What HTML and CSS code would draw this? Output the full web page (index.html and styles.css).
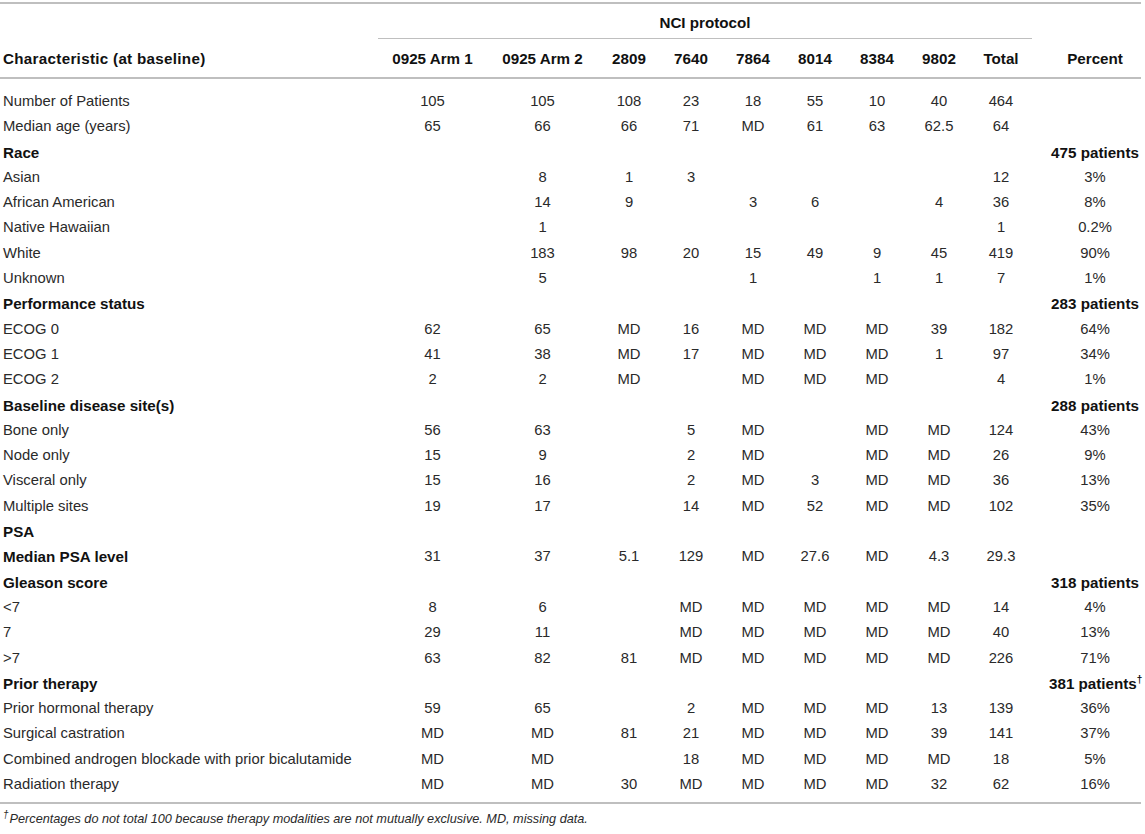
FILE: index.html
```html
<!DOCTYPE html>
<html>
<head>
<meta charset="utf-8">
<link rel="stylesheet" href="styles.css">
</head>
<body>
<div class="wrap">
<table class="tbl">
<colgroup>
<col class="c-label"><col class="c-arm"><col class="c-arm2"><col class="c-n"><col class="c-n"><col class="c-n"><col class="c-n"><col class="c-n"><col class="c-n"><col class="c-n"><col class="c-pct">
</colgroup>
<thead>
<tr class="r-group">
<th class="label"></th>
<th colspan="9" class="nci">NCI protocol</th>
<th></th>
</tr>
<tr class="r-head">
<th class="label">Characteristic (at baseline)</th>
<th>0925 Arm 1</th><th>0925 Arm 2</th><th>2809</th><th>7640</th><th>7864</th><th>8014</th><th>8384</th><th>9802</th><th>Total</th><th class="pct">Percent</th>
</tr>
</thead>
<tbody>
<tr class="first"><td class="label">Number of Patients</td><td>105</td><td>105</td><td>108</td><td>23</td><td>18</td><td>55</td><td>10</td><td>40</td><td>464</td><td class="pct"></td></tr>
<tr><td class="label">Median age (years)</td><td>65</td><td>66</td><td>66</td><td>71</td><td>MD</td><td>61</td><td>63</td><td>62.5</td><td>64</td><td class="pct"></td></tr>
<tr class="sec"><td class="label">Race</td><td></td><td></td><td></td><td></td><td></td><td></td><td></td><td></td><td></td><td class="pct">475 patients</td></tr>
<tr><td class="label">Asian</td><td></td><td>8</td><td>1</td><td>3</td><td></td><td></td><td></td><td></td><td>12</td><td class="pct">3%</td></tr>
<tr><td class="label">African American</td><td></td><td>14</td><td>9</td><td></td><td>3</td><td>6</td><td></td><td>4</td><td>36</td><td class="pct">8%</td></tr>
<tr><td class="label">Native Hawaiian</td><td></td><td>1</td><td></td><td></td><td></td><td></td><td></td><td></td><td>1</td><td class="pct">0.2%</td></tr>
<tr><td class="label">White</td><td></td><td>183</td><td>98</td><td>20</td><td>15</td><td>49</td><td>9</td><td>45</td><td>419</td><td class="pct">90%</td></tr>
<tr><td class="label">Unknown</td><td></td><td>5</td><td></td><td></td><td>1</td><td></td><td>1</td><td>1</td><td>7</td><td class="pct">1%</td></tr>
<tr class="sec"><td class="label">Performance status</td><td></td><td></td><td></td><td></td><td></td><td></td><td></td><td></td><td></td><td class="pct">283 patients</td></tr>
<tr><td class="label">ECOG 0</td><td>62</td><td>65</td><td>MD</td><td>16</td><td>MD</td><td>MD</td><td>MD</td><td>39</td><td>182</td><td class="pct">64%</td></tr>
<tr><td class="label">ECOG 1</td><td>41</td><td>38</td><td>MD</td><td>17</td><td>MD</td><td>MD</td><td>MD</td><td>1</td><td>97</td><td class="pct">34%</td></tr>
<tr><td class="label">ECOG 2</td><td>2</td><td>2</td><td>MD</td><td></td><td>MD</td><td>MD</td><td>MD</td><td></td><td>4</td><td class="pct">1%</td></tr>
<tr class="sec"><td class="label">Baseline disease site(s)</td><td></td><td></td><td></td><td></td><td></td><td></td><td></td><td></td><td></td><td class="pct">288 patients</td></tr>
<tr><td class="label">Bone only</td><td>56</td><td>63</td><td></td><td>5</td><td>MD</td><td></td><td>MD</td><td>MD</td><td>124</td><td class="pct">43%</td></tr>
<tr><td class="label">Node only</td><td>15</td><td>9</td><td></td><td>2</td><td>MD</td><td></td><td>MD</td><td>MD</td><td>26</td><td class="pct">9%</td></tr>
<tr><td class="label">Visceral only</td><td>15</td><td>16</td><td></td><td>2</td><td>MD</td><td>3</td><td>MD</td><td>MD</td><td>36</td><td class="pct">13%</td></tr>
<tr><td class="label">Multiple sites</td><td>19</td><td>17</td><td></td><td>14</td><td>MD</td><td>52</td><td>MD</td><td>MD</td><td>102</td><td class="pct">35%</td></tr>
<tr class="sec"><td class="label">PSA</td><td></td><td></td><td></td><td></td><td></td><td></td><td></td><td></td><td></td><td class="pct"></td></tr>
<tr><td class="label bold">Median PSA level</td><td>31</td><td>37</td><td>5.1</td><td>129</td><td>MD</td><td>27.6</td><td>MD</td><td>4.3</td><td>29.3</td><td class="pct"></td></tr>
<tr class="sec"><td class="label">Gleason score</td><td></td><td></td><td></td><td></td><td></td><td></td><td></td><td></td><td></td><td class="pct">318 patients</td></tr>
<tr><td class="label">&lt;7</td><td>8</td><td>6</td><td></td><td>MD</td><td>MD</td><td>MD</td><td>MD</td><td>MD</td><td>14</td><td class="pct">4%</td></tr>
<tr><td class="label">7</td><td>29</td><td>11</td><td></td><td>MD</td><td>MD</td><td>MD</td><td>MD</td><td>MD</td><td>40</td><td class="pct">13%</td></tr>
<tr><td class="label">&gt;7</td><td>63</td><td>82</td><td>81</td><td>MD</td><td>MD</td><td>MD</td><td>MD</td><td>MD</td><td>226</td><td class="pct">71%</td></tr>
<tr class="sec"><td class="label">Prior therapy</td><td></td><td></td><td></td><td></td><td></td><td></td><td></td><td></td><td></td><td class="pct">381 patients<sup class="dag">†</sup></td></tr>
<tr><td class="label">Prior hormonal therapy</td><td>59</td><td>65</td><td></td><td>2</td><td>MD</td><td>MD</td><td>MD</td><td>13</td><td>139</td><td class="pct">36%</td></tr>
<tr><td class="label">Surgical castration</td><td>MD</td><td>MD</td><td>81</td><td>21</td><td>MD</td><td>MD</td><td>MD</td><td>39</td><td>141</td><td class="pct">37%</td></tr>
<tr><td class="label">Combined androgen blockade with prior bicalutamide</td><td>MD</td><td>MD</td><td></td><td>18</td><td>MD</td><td>MD</td><td>MD</td><td>MD</td><td>18</td><td class="pct">5%</td></tr>
<tr class="last"><td class="label">Radiation therapy</td><td>MD</td><td>MD</td><td>30</td><td>MD</td><td>MD</td><td>MD</td><td>MD</td><td>32</td><td>62</td><td class="pct">16%</td></tr>
</tbody>
</table>
<p class="note"><sup class="ndag">†</sup>Percentages do not total 100 because therapy modalities are not mutually exclusive. MD, missing data.</p>
</div>
</body>
</html>
```

FILE: styles.css
```css
html, body {
  margin: 0;
  padding: 0;
  background: #ffffff;
}
body {
  font-family: "Liberation Sans", Arial, Helvetica, sans-serif;
  color: #2a2a2a;
}
.wrap {
  padding-top: 2px;
}
.tbl {
  width: 1141px;
  table-layout: fixed;
  border-collapse: collapse;
  font-size: 14.8px;
}
.c-label { width: 378px; }
.c-arm { width: 109px; }
.c-arm2 { width: 111px; }
.c-n { width: 62px; }
.c-pct { width: 109px; }

.tbl th, .tbl td {
  padding: 0;
  text-align: center;
  white-space: nowrap;
  font-weight: normal;
}
.tbl th {
  font-weight: bold;
  color: #111111;
  font-size: 15.2px;
}
.tbl .label {
  text-align: left;
  padding-left: 3px;
}
.tbl .pct {
  padding-left: 17px;
}
.r-group th {
  border-top: 2px solid #bfbfbf;
  line-height: 17px;
  padding-top: 10px;
  padding-bottom: 7px;
}
.r-group .nci {
  border-bottom: 1px solid #bfbfbf;
}
.r-head th {
  line-height: 17px;
  padding-top: 11px;
  padding-bottom: 10px;
  border-bottom: 2px solid #bfbfbf;
}
.r-head th.label {
  letter-spacing: 0.3px;
}
.tbl td {
  line-height: 25.3px;
}
.tbl tr.first td {
  padding-top: 10px;
}
.tbl tr.last td {
  padding-bottom: 5px;
  border-bottom: 2px solid #bfbfbf;
}
.tbl tr.sec td {
  font-weight: bold;
  color: #111111;
  font-size: 15.2px;
}
.tbl td.bold {
  font-weight: bold;
  color: #111111;
  font-size: 15.2px;
}
.dag {
  font-size: 10px;
  line-height: 0;
  vertical-align: 6px;
}
.note {
  margin: 7px 0 0 0;
  padding-left: 3px;
  font-size: 12.7px;
  line-height: 17px;
  font-style: italic;
  color: #2a2a2a;
}
.ndag {
  font-size: 10px;
  line-height: 0;
  vertical-align: 5px;
  margin-right: 1px;
}
```
